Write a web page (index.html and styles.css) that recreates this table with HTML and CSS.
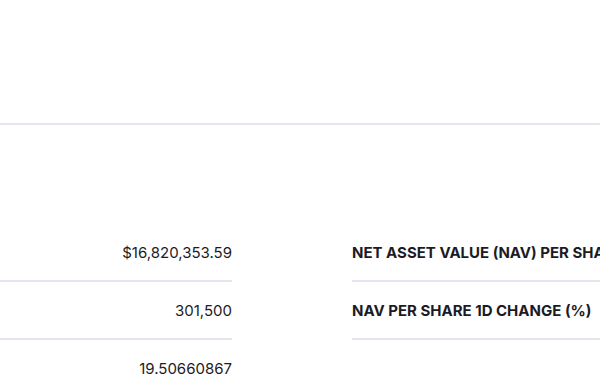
FILE: index.html
```html
<!DOCTYPE html>
<html>
<head>
<meta charset="utf-8">
<link rel="stylesheet" href="styles.css">
</head>
<body>
<header class="top"></header>
<section class="facts">
  <div class="col col-values">
    <div class="row value">$16,820,353.59</div>
    <div class="row value">301,500</div>
    <div class="row value">19.50660867</div>
  </div>
  <div class="col col-labels">
    <div class="row label">NET ASSET VALUE (NAV) PER SHARE</div>
    <div class="row label">NAV PER SHARE 1D CHANGE (%)</div>
  </div>
</section>
</body>
</html>
```
FILE: styles.css
```css
html, body {
  margin: 0;
  padding: 0;
  background: #ffffff;
  overflow: hidden;
  width: 600px;
  height: 392px;
}
body {
  font-family: Inter, "Liberation Sans", sans-serif;
  color: #1c1b24;
}
.top {
  height: 123px;
  border-bottom: 2px solid #e6e5ef;
}
.facts {
  display: flex;
  gap: 120px;
  padding-top: 99px;
}
.col {
  display: flex;
  flex-direction: column;
  flex: none;
}
.col-values {
  width: 232px;
}
.col-labels {
  width: 420px;
}
.row {
  height: 56px;
  display: flex;
  align-items: center;
  border-bottom: 2px solid #e6e5ef;
  white-space: nowrap;
}
.value {
  justify-content: flex-end;
  font-size: 15px;
  font-weight: 400;
}
.label {
  font-size: 15px;
  font-weight: 700;
}
```
